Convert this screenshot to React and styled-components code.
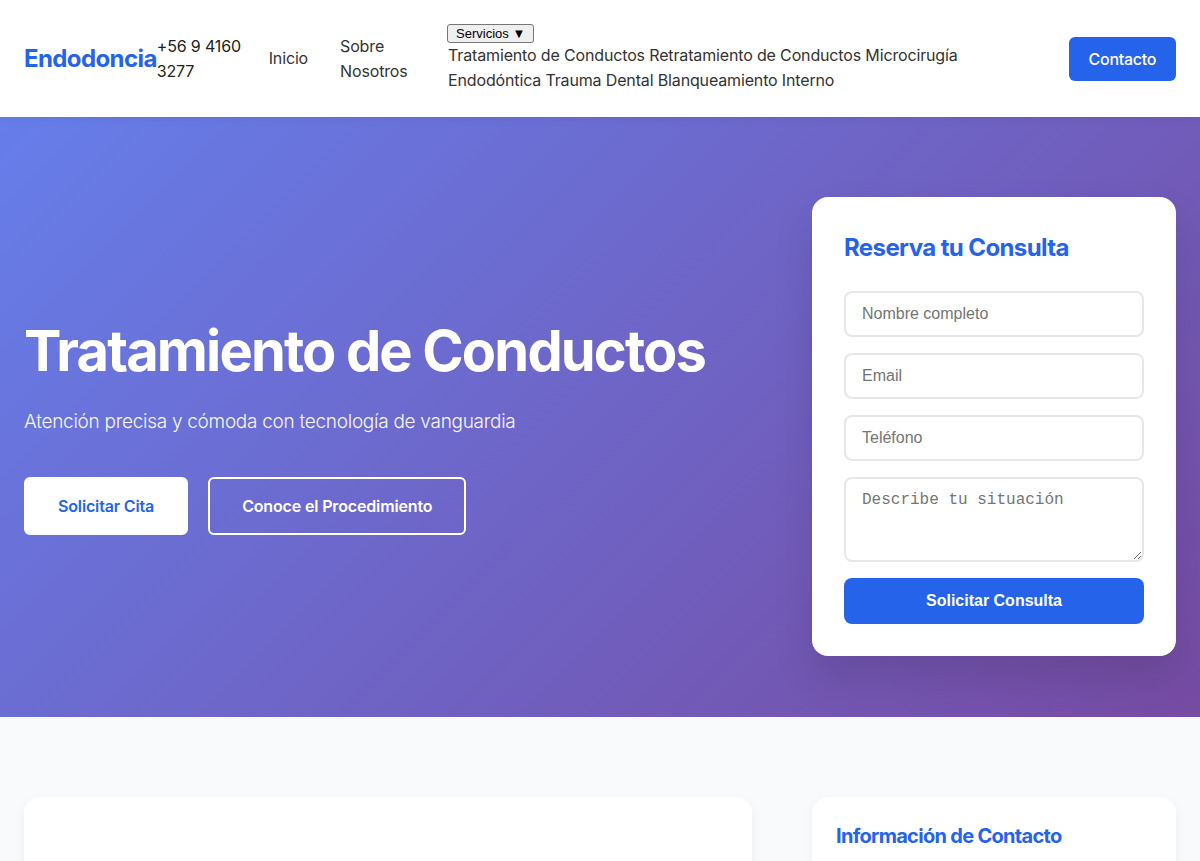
import React from 'react';
import styled, { createGlobalStyle } from 'styled-components';

const GlobalStyle = createGlobalStyle`
  * { box-sizing: border-box; }
  body {
    margin: 0;
    font-family: Inter, "Noto Sans", sans-serif;
    line-height: 1.6;
    letter-spacing: -0.15px;
    color: #333;
    background: #f8fafc;
  }
`;

const Header = styled.header`
  background: #fff;
  box-shadow: 0 2px 10px rgba(0, 0, 0, 0.06);
  position: relative;
  z-index: 2;
`;

const HeaderInner = styled.div`
  display: flex;
  align-items: center;
  padding: 24px;
  line-height: 25px;
`;

const Logo = styled.div`
  font-size: 24px;
  font-weight: 700;
  color: #2563eb;
  letter-spacing: -0.6px;
  white-space: nowrap;
`;

const Phone = styled.div`
  width: 90px;
  font-size: 16px;
  color: #222;
`;

const Nav = styled.ul`
  display: flex;
  align-items: center;
  gap: 32px;
  list-style: none;
  margin: 0 0 0 22px;
  padding: 0;
`;

const NavLink = styled.li`
  font-size: 16px;
  color: #333;
  width: ${p => p.$width || 'auto'};
`;

const Dropdown = styled.li`
  display: flex;
  flex-direction: column;
  align-items: flex-start;
  margin-left: 7px;
`;

const DropButton = styled.button`
  font-family: "Liberation Sans", Arial, sans-serif;
  font-size: 13px;
  line-height: 15px;
  letter-spacing: 0;
  padding: 1px 8px;
  height: 19px;
  background: #efefef;
  border: 1px solid #767676;
  border-radius: 3px;
  color: #000;
`;

const ServiceList = styled.div`
  width: 525px;
  font-size: 16px;
  color: #333;
  padding-left: 1px;
`;

const ContactButton = styled.button`
  margin-left: auto;
  background: #2563eb;
  color: #fff;
  border: none;
  border-radius: 6px;
  padding: 10px 20px;
  height: 44px;
  font-family: Inter, sans-serif;
  font-size: 16px;
  font-weight: 500;
  letter-spacing: -0.3px;
  line-height: 24px;
`;

const Hero = styled.section`
  background: linear-gradient(135deg, #667eea 0%, #764ba2 100%);
  padding: 80px 24px 61px;
`;

const HeroGrid = styled.div`
  display: grid;
  grid-template-columns: 2fr 1fr;
  gap: 60px;
  align-items: center;
`;

const HeroText = styled.div`
  color: #fff;
`;

const Title = styled.h1`
  margin: 0 0 21px;
  font-size: 56px;
  font-weight: 700;
  line-height: 1.2;
  letter-spacing: -1.85px;
`;

const Subtitle = styled.p`
  margin: 0 0 40px;
  font-size: 19px;
  font-weight: 300;
  letter-spacing: -0.28px;
  opacity: 0.95;
`;

const Buttons = styled.div`
  display: flex;
  gap: 20px;
`;

const HeroButton = styled.button`
  padding: 16px 32px;
  border-radius: 6px;
  font-family: Inter, sans-serif;
  font-size: 16px;
  font-weight: 600;
  line-height: 22px;
  letter-spacing: -0.15px;
  border: 2px solid #fff;
  background: ${p => (p.$outline ? 'transparent' : '#fff')};
  color: ${p => (p.$outline ? '#fff' : '#2563eb')};
`;

const FormCard = styled.div`
  background: #fff;
  border-radius: 16px;
  padding: 32px;
  box-shadow: 0 20px 40px rgba(0, 0, 0, 0.12);
`;

const FormTitle = styled.h3`
  margin: 0 0 24px;
  font-size: 24px;
  font-weight: 700;
  color: #2563eb;
  line-height: 1.6;
  letter-spacing: -0.6px;
`;

const Form = styled.form`
  display: flex;
  flex-direction: column;
  gap: 16px;
`;

const Input = styled.input`
  width: 100%;
  padding: 12px 16px;
  border: 2px solid #e5e7eb;
  border-radius: 8px;
  font-family: "Liberation Sans", Arial, sans-serif;
  font-size: 16px;
  line-height: 18px;
  &::placeholder { color: #757575; }
`;

const TextArea = styled.textarea`
  width: 100%;
  height: 85px;
  padding: 12px 16px;
  border: 2px solid #e5e7eb;
  border-radius: 8px;
  font-family: "Liberation Mono", monospace;
  font-size: 16px;
  line-height: 18px;
  &::placeholder { color: #757575; }
`;

const Submit = styled.button`
  height: 46px;
  background: #2563eb;
  color: #fff;
  border: none;
  border-radius: 8px;
  font-family: "Liberation Sans", Arial, sans-serif;
  font-size: 16px;
  font-weight: 700;
`;

const Content = styled.section`
  padding: 80px 24px;
  background: #f8fafc;
`;

const ContentGrid = styled.div`
  display: grid;
  grid-template-columns: 2fr 1fr;
  gap: 60px;
  align-items: start;
`;

const Card = styled.div`
  background: #fff;
  border-radius: 16px;
  padding: 24px;
  min-height: ${p => p.$min || '300px'};
  box-shadow: 0 4px 12px rgba(0, 0, 0, 0.05);
`;

const CardTitle = styled.h3`
  margin: 0;
  font-size: 20px;
  font-weight: 700;
  line-height: 1.5;
  letter-spacing: -0.7px;
  color: #2563eb;
`;

export default function App() {
  return (
    <>
      <GlobalStyle />
      <Header>
        <HeaderInner>
          <Logo>Endodoncia</Logo>
          <Phone>+56 9 4160 3277</Phone>
          <Nav>
            <NavLink>Inicio</NavLink>
            <NavLink $width="68px">Sobre Nosotros</NavLink>
            <Dropdown>
              <DropButton>Servicios ▼</DropButton>
              <ServiceList>
                Tratamiento de Conductos Retratamiento de Conductos Microcirugía Endodóntica Trauma Dental Blanqueamiento Interno
              </ServiceList>
            </Dropdown>
          </Nav>
          <ContactButton>Contacto</ContactButton>
        </HeaderInner>
      </Header>

      <Hero>
        <HeroGrid>
          <HeroText>
            <Title>Tratamiento de Conductos</Title>
            <Subtitle>Atención precisa y cómoda con tecnología de vanguardia</Subtitle>
            <Buttons>
              <HeroButton>Solicitar Cita</HeroButton>
              <HeroButton $outline>Conoce el Procedimiento</HeroButton>
            </Buttons>
          </HeroText>
          <FormCard>
            <FormTitle>Reserva tu Consulta</FormTitle>
            <Form onSubmit={e => e.preventDefault()}>
              <Input placeholder="Nombre completo" />
              <Input placeholder="Email" />
              <Input placeholder="Teléfono" />
              <TextArea placeholder="Describe tu situación" />
              <Submit>Solicitar Consulta</Submit>
            </Form>
          </FormCard>
        </HeroGrid>
      </Hero>

      <Content>
        <ContentGrid>
          <Card $min="400px" />
          <Card>
            <CardTitle>Información de Contacto</CardTitle>
          </Card>
        </ContentGrid>
      </Content>
    </>
  );
}
